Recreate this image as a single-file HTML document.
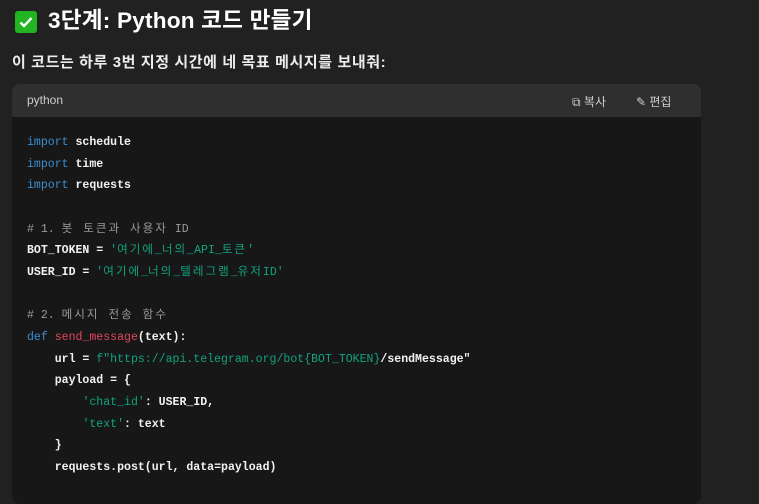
<!DOCTYPE html>
<html><head><meta charset="utf-8"><style>
html,body{margin:0;padding:0;background:#212121;width:759px;height:478px;overflow:hidden;color:#ececec;font-family:"Liberation Sans","Noto Sans CJK KR",sans-serif}
.chk{position:absolute;left:15px;top:11px;width:22px;height:22px;background:#22b422;border-radius:3px}
.chk svg{position:absolute;left:3px;top:3px}
h1{position:absolute;left:48px;top:6px;margin:0;font-size:22.6px;font-weight:bold;color:#fff;line-height:30px;white-space:nowrap;letter-spacing:0.2px}
.sub{position:absolute;left:12px;top:53px;font-size:15px;font-weight:bold;color:#ececec;line-height:20px;white-space:nowrap;letter-spacing:0.6px}
.block{position:absolute;left:12px;top:84px;width:689px;height:420px;background:#171717;border-radius:8px;overflow:hidden}
.hdr{height:33px;background:#2f2f2f;position:relative;font-size:12px;color:#cdcdcd}
.hdr .lang{position:absolute;left:15px;top:9px}
.hdr .b{position:absolute;top:9px;white-space:nowrap}
pre{margin:0;position:absolute;left:15px;top:48px;font-family:"Liberation Mono","Noto Sans CJK KR",monospace;font-size:11.55px;line-height:21.65px;font-weight:bold;color:#f2f2f2}
.k{color:#3b8ed0;font-weight:normal}.s{color:#11a37f;font-weight:normal}.c{color:#9a9a9a;font-weight:normal}.f{color:#e0475b;font-weight:normal}
.h{letter-spacing:2px}
</style></head><body>
<div class="chk"><svg width="16" height="16" viewBox="0 0 16 16"><path d="M2.5 8.5l3.5 3.5 7.5-8" stroke="#fff" stroke-width="2.4" fill="none"/></svg></div>
<h1>3단계: Python 코드 만들기</h1>
<div class="sub">이 코드는 하루 3번 지정 시간에 네 목표 메시지를 보내줘:</div>
<div class="block">
<div class="hdr"><span class="lang">python</span>
<span class="b" style="left:560px">⧉ 복사</span>
<span class="b" style="left:624px">✎ 편집</span></div>
<pre><span class="k">import</span> schedule
<span class="k">import</span> time
<span class="k">import</span> requests

<span class="c"># 1. <span class="h">봇 토큰과 사용자</span> ID</span>
BOT_TOKEN = <span class="s">'<span class="h">여기에</span>_<span class="h">너의</span>_API_<span class="h">토큰</span>'</span>
USER_ID = <span class="s">'<span class="h">여기에</span>_<span class="h">너의</span>_<span class="h">텔레그램</span>_<span class="h">유저</span>ID'</span>

<span class="c"># 2. <span class="h">메시지 전송 함수</span></span>
<span class="k">def</span> <span class="f">send_message</span>(text):
    url = <span class="s">f"https://api.telegram.org/bot{BOT_TOKEN}</span>/sendMessage"
    payload = {
        <span class="s">'chat_id'</span>: USER_ID,
        <span class="s">'text'</span>: text
    }
    requests.post(url, data=payload)</pre>
</div>
</body></html>
